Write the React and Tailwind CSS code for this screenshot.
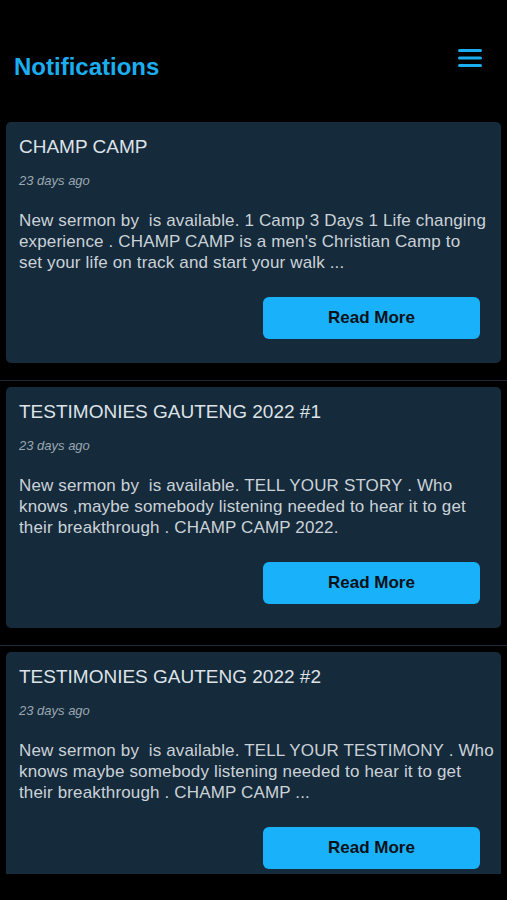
import React from "react";

const notifications = [
  {
    id: 1,
    title: "CHAMP CAMP",
    date: "23 days ago",
    lines: [
      "New sermon by \u00a0is available. 1 Camp 3 Days 1 Life changing",
      "experience . CHAMP CAMP is a men's Christian Camp to",
      "set your life on track and start your walk ...",
    ],
  },
  {
    id: 2,
    title: "TESTIMONIES GAUTENG 2022 #1",
    date: "23 days ago",
    lines: [
      "New sermon by \u00a0is available. TELL YOUR STORY . Who",
      "knows ,maybe somebody listening needed to hear it to get",
      "their breakthrough . CHAMP CAMP 2022.",
    ],
  },
  {
    id: 3,
    title: "TESTIMONIES GAUTENG 2022 #2",
    date: "23 days ago",
    lines: [
      "New sermon by \u00a0is available. TELL YOUR TESTIMONY . Who",
      "knows maybe somebody listening needed to hear it to get",
      "their breakthrough . CHAMP CAMP ...",
    ],
  },
];

function MenuIcon() {
  return (
    <svg width="24" height="18" viewBox="0 0 24 18" fill="#1aaef0">
      <rect x="0" y="0" width="24" height="3" rx="1.5" />
      <rect x="0" y="7.5" width="24" height="3" rx="1.5" />
      <rect x="0" y="15" width="24" height="3" rx="1.5" />
    </svg>
  );
}

function NotificationCard({ item }) {
  return (
    <div className="mx-[6px] rounded-[5px] bg-[#152a3b] pl-[13px] pr-[21px] pt-[13px] pb-[24px]">
      <h2 className="text-[19px] leading-[24px] text-[#dde3e8]">{item.title}</h2>
      <p className="mt-[14px] text-[13px] leading-[16px] italic text-[#9ba7b1]">
        {item.date}
      </p>
      <p className="mt-[21px] whitespace-nowrap text-[17px] leading-[21px] tracking-[0.15px] text-[#cbd2d8]">
        {item.lines.map((line, i) => (
          <span key={i} className="block">
            {line}
          </span>
        ))}
      </p>
      <div className="mt-[24px] flex justify-end">
        <button className="h-[42px] w-[217px] rounded-[6px] bg-[#1ab1fb] text-[17px] font-bold text-[#0b1117]">
          Read More
        </button>
      </div>
    </div>
  );
}

export default function App() {
  return (
    <div
      className="h-[900px] w-full bg-black"
      style={{ fontFamily: '"Liberation Sans", Arial, sans-serif' }}
    >
      <header className="flex h-[122px] items-start justify-between pl-[14px] pr-[25px]">
        <h1 className="mt-[53px] text-[24px] font-bold leading-[28px] text-[#1aaef0]">
          Notifications
        </h1>
        <div className="mt-[49px]">
          <MenuIcon />
        </div>
      </header>
      <div className="h-[752px] overflow-hidden">
        {notifications.map((item, i) => (
          <div key={item.id}>
            {i > 0 && (
              <div className="pt-[17px] pb-[6px]">
                <div className="h-px bg-[#1c2b37]" />
              </div>
            )}
            <NotificationCard item={item} />
          </div>
        ))}
      </div>
    </div>
  );
}
